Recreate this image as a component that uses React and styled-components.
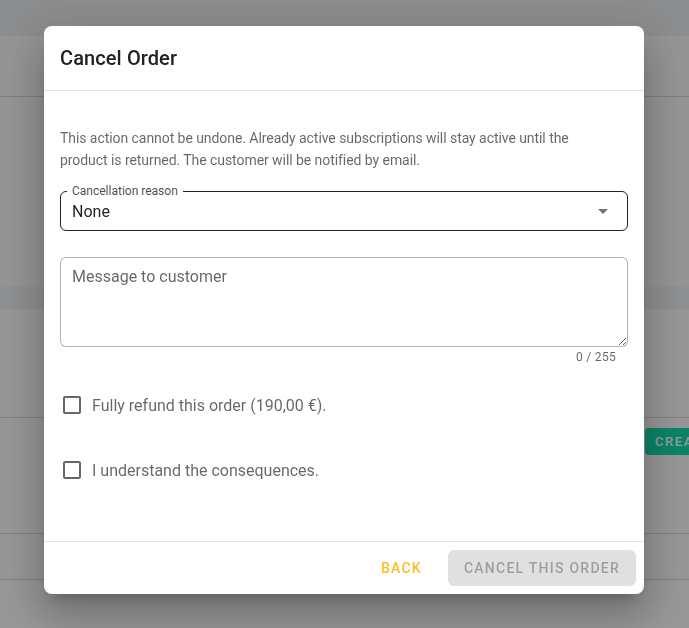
import React from 'react'
import styled, { createGlobalStyle } from 'styled-components'

const Global = createGlobalStyle`
  html, body {
    margin: 0;
    padding: 0;
    width: 100%;
    height: 100%;
    overflow: hidden;
    font-family: Roboto, "Noto Sans", Arial, sans-serif;
  }
  * { box-sizing: border-box; }
`

function Checkbox({ label }) {
    return (
        <CheckRow>
            <Box />
            <CheckLabel>{label}</CheckLabel>
        </CheckRow>
    )
}

function App() {
    return (
        <>
            <Global />
            <Page>
                <TopBar />
                <Block h={61} line />
                <Block h={190} />
                <Band />
                <Block h={109} line light />
                <Row h={116} line>
                    <CreateBtn>CREATE</CreateBtn>
                </Row>
                <Block h={46} line light />
                <Block h={60} light />
            </Page>

            <Backdrop>
                <Dialog>
                    <Header>
                        <Title>Cancel Order</Title>
                    </Header>
                    <Content>
                        <Text>
                            This action cannot be undone. Already active subscriptions will stay active until the
                            <br />
                            product is returned. The customer will be notified by email.
                        </Text>

                        <SelectField>
                            <FieldLabel>Cancellation reason</FieldLabel>
                            <SelectValue>None</SelectValue>
                            <svg width="24" height="24" viewBox="0 0 24 24">
                                <path d="M7 10l5 5 5-5z" fill="rgba(0,0,0,0.54)" />
                            </svg>
                        </SelectField>

                        <Message placeholder="Message to customer" />
                        <Counter>0 / 255</Counter>

                        <Checks>
                            <Checkbox label="Fully refund this order (190,00 €)." />
                            <Checkbox label="I understand the consequences." />
                        </Checks>
                    </Content>
                    <Footer>
                        <TextBtn>BACK</TextBtn>
                        <DisabledBtn disabled>CANCEL THIS ORDER</DisabledBtn>
                    </Footer>
                </Dialog>
            </Backdrop>
        </>
    )
}

export default App

const Page = styled.div`
width: 689px;
height: 628px;
display: flex;
flex-direction: column;
background: #f9f9f9;
overflow: hidden;
`
const TopBar = styled.div`
height: 36px;
flex-shrink: 0;
background: #eaebed;
`
const Block = styled.div`
height: ${p => p.h}px;
flex-shrink: 0;
background: ${p => (p.light ? '#fafafa' : '#f6f6f6')};
border-bottom: ${p => (p.line ? '1px solid #d4d4d4' : 'none')};
`
const Band = styled.div`
height: 22px;
flex-shrink: 0;
background: #edeef0;
`
const Row = styled.div`
height: ${p => p.h}px;
flex-shrink: 0;
display: flex;
align-items: flex-start;
padding: 10px 0 0 645px;
background: #fafafa;
border-bottom: 1px solid #d4d4d4;
overflow: hidden;
`
const CreateBtn = styled.div`
height: 27px;
padding: 0 10px;
display: flex;
align-items: center;
background: #12dca8;
color: #fff;
border-radius: 4px;
font-size: 13px;
font-weight: 500;
letter-spacing: 1.6px;
white-space: nowrap;
`

const Backdrop = styled.div`
position: fixed;
inset: 0;
background: rgba(0, 0, 0, 0.4);
display: flex;
justify-content: flex-start;
padding: 26px 0 0 44px;
`
const Dialog = styled.div`
width: 600px;
height: 568px;
background: #fff;
border-radius: 8px;
box-shadow: 0 11px 15px -7px rgba(0,0,0,0.2), 0 24px 38px 3px rgba(0,0,0,0.14), 0 9px 46px 8px rgba(0,0,0,0.12);
display: flex;
flex-direction: column;
overflow: hidden;
`
const Header = styled.div`
height: 65px;
flex-shrink: 0;
display: flex;
align-items: center;
padding: 0 16px;
border-bottom: 1px solid #e0e0e0;
`
const Title = styled.h2`
margin: 0;
font-size: 20px;
font-weight: 500;
color: #212121;
letter-spacing: 0.1px;
`
const Content = styled.div`
flex: 1;
padding: 36px 16px 0;
display: flex;
flex-direction: column;
`
const Text = styled.p`
margin: 0 0 20px;
font-size: 14px;
line-height: 22px;
letter-spacing: -0.06px;
color: rgba(0, 0, 0, 0.6);
white-space: nowrap;
`
const SelectField = styled.div`
position: relative;
height: 40px;
border: 1px solid rgba(0, 0, 0, 0.87);
border-radius: 6px;
display: flex;
align-items: center;
justify-content: space-between;
padding: 0 12px 0 11px;
`
const FieldLabel = styled.span`
position: absolute;
left: 6px;
top: -8px;
padding: 0 5px;
background: #fff;
font-size: 12px;
line-height: 14px;
color: rgba(0, 0, 0, 0.72);
`
const SelectValue = styled.span`
font-size: 16px;
color: rgba(0, 0, 0, 0.87);
`
const Message = styled.textarea`
margin-top: 26px;
height: 90px;
width: 100%;
border: 1px solid rgba(0, 0, 0, 0.3);
border-radius: 6px;
padding: 9px 11px;
font-family: inherit;
font-size: 16px;
line-height: 19px;
color: rgba(0, 0, 0, 0.87);
outline: none;
display: block;
&::placeholder {
  color: rgba(0, 0, 0, 0.6);
}
`
const Counter = styled.div`
align-self: flex-end;
margin: 2px 12px 0 0;
font-size: 12px;
line-height: 16px;
color: rgba(0, 0, 0, 0.6);
letter-spacing: 0.3px;
`
const Checks = styled.div`
margin-top: 19px;
display: flex;
flex-direction: column;
gap: 23px;
`
const CheckRow = styled.label`
height: 42px;
display: flex;
align-items: center;
gap: 11px;
padding-left: 3px;
`
const Box = styled.span`
width: 18px;
height: 18px;
border: 2px solid rgba(0, 0, 0, 0.6);
border-radius: 2px;
flex-shrink: 0;
`
const CheckLabel = styled.span`
font-size: 16px;
color: rgba(0, 0, 0, 0.6);
`
const Footer = styled.div`
height: 53px;
flex-shrink: 0;
border-top: 1px solid #e0e0e0;
display: flex;
align-items: center;
justify-content: flex-end;
gap: 10px;
padding: 0 8px;
`
const TextBtn = styled.button`
height: 36px;
padding: 0 16px;
border: none;
background: transparent;
font-family: inherit;
font-size: 14px;
font-weight: 500;
letter-spacing: 1.25px;
color: #fbbf24;
cursor: pointer;
`
const DisabledBtn = styled.button`
height: 36px;
padding: 0 16px;
border: none;
border-radius: 6px;
background: #e0e0e0;
font-family: inherit;
font-size: 14px;
font-weight: 500;
letter-spacing: 1.25px;
color: rgba(0, 0, 0, 0.3);
`
